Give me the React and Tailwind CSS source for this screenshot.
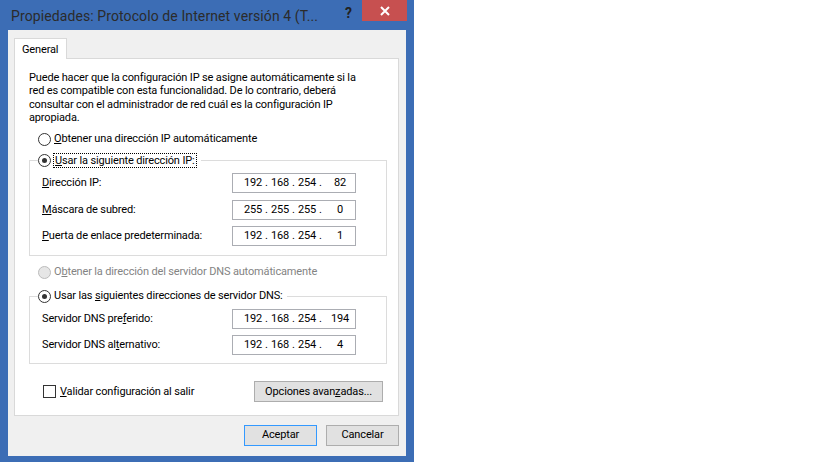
import React from 'react'

function Radio({ checked, disabled }) {
  return (
    <span
      className={
        'w-[13px] h-[13px] rounded-full border flex items-center justify-center shrink-0 ' +
        (disabled ? 'border-[#bcbcbc] bg-[#e6e6e6]' : 'border-[#333333] bg-white')
      }
    >
      {checked && <span className="w-[5px] h-[5px] rounded-full bg-[#333333]" />}
    </span>
  )
}

function IpField({ parts }) {
  return (
    <div className="w-[124px] h-[20px] border border-[#abadb3] bg-white flex items-center pl-[9px]">
      <span className="w-[22px] text-center">{parts[0]}</span>
      <span className="w-[5px] text-center">.</span>
      <span className="w-[22px] text-center">{parts[1]}</span>
      <span className="w-[5px] text-center">.</span>
      <span className="w-[22px] text-center">{parts[2]}</span>
      <span className="w-[5px] text-center">.</span>
      <span className="w-[22px] ml-[6px] text-center">{parts[3]}</span>
    </div>
  )
}

function Row({ label, parts }) {
  return (
    <div className="flex items-center justify-between h-[20px]">
      <span className="whitespace-nowrap">{label}</span>
      <IpField parts={parts} />
    </div>
  )
}

function Btn({ children, primary, className = '' }) {
  return (
    <button
      className={
        'h-[21px] bg-[#e1e1e1] border flex items-center justify-center ' +
        (primary ? 'border-[#3399ff] ' : 'border-[#adadad] ') +
        className
      }
    >
      {children}
    </button>
  )
}

export default function App() {
  return (
    <div className="w-[819px] h-[462px] bg-white flex font-['Roboto',sans-serif] text-[11px] tracking-[-0.15px] text-black">
      <div className="w-[414px] h-full bg-[#3c6db5] flex flex-col">
        {/* title bar */}
        <div className="h-[30px] flex items-start">
          <div className="flex-1 pl-[11px] pt-[6px] text-[14px] tracking-[0.1px] text-[#2b2b2b] whitespace-nowrap">
            Propiedades: Protocolo de Internet versión 4 (T...
          </div>
          <div className="w-[17px] pt-[3px] text-[14px] font-bold text-[#222]">?</div>
          <div className="w-[45px] h-[21px] bg-[#c75050] flex items-center justify-center mr-[7px]">
            <svg width="10" height="10" viewBox="0 0 10 10">
              <path d="M1 1 L9 9 M9 1 L1 9" stroke="white" strokeWidth="2" />
            </svg>
          </div>
        </div>

        {/* client */}
        <div className="mx-[8px] mb-[6px] flex-1 bg-[#f0f0f0] pt-[8px] pl-[6px] pr-[7px] flex flex-col">
          <div className="flex">
            <div className="h-[21px] w-[53px] -mb-px relative z-10 bg-white border border-b-0 border-[#d9d9d9] pl-[7px] pt-[3px]">
              General
            </div>
          </div>
          <div className="h-[358px] bg-white border border-[#d9d9d9] pl-[14px]">
            <p className="mt-[12px] leading-[13.33px] whitespace-nowrap">
              Puede hacer que la configuración IP se asigne automáticamente si la
              <br />
              red es compatible con esta funcionalidad. De lo contrario, deberá
              <br />
              consultar con el administrador de red cuál es la configuración IP
              <br />
              apropiada.
            </p>

            <div className="mt-[7px] h-[16px] flex items-center pl-[9px] gap-[3px]">
              <Radio />
              <span>
                <u>O</u>btener una dirección IP automáticamente
              </span>
            </div>

            <fieldset className="mt-[5px] w-[358px] border border-[#dcdcdc]">
              <legend className="ml-[8px] pr-[4px] h-[16px] flex items-center gap-[2px]">
                <Radio checked />
                <span className="border border-dotted border-black leading-[13px] px-px">
                  <u>U</u>sar la siguiente dirección IP:
                </span>
              </legend>
              <div className="pl-[12px] pr-[30px] pt-[5px] pb-[9px] flex flex-col gap-[6.5px]">
                <Row label={<><u>D</u>irección IP:</>} parts={['192', '168', '254', '82']} />
                <Row label={<><u>M</u>áscara de subred:</>} parts={['255', '255', '255', '0']} />
                <Row label={<><u>P</u>uerta de enlace predeterminada:</>} parts={['192', '168', '254', '1']} />
              </div>
            </fieldset>

            <div className="mt-[8px] h-[16px] flex items-center pl-[9px] gap-[3px] text-[#838383]">
              <Radio disabled />
              <span>
                O<u>b</u>tener la dirección del servidor DNS automáticamente
              </span>
            </div>

            <fieldset className="mt-[8px] w-[358px] border border-[#dcdcdc]">
              <legend className="ml-[8px] pr-[4px] h-[16px] flex items-center gap-[3px]">
                <Radio checked />
                <span>
                  Usar las <u>s</u>iguientes direcciones de servidor DNS:
                </span>
              </legend>
              <div className="pl-[12px] pr-[30px] pt-[5px] pb-[8px] flex flex-col gap-[6px]">
                <Row label={<>Servidor DNS pre<u>f</u>erido:</>} parts={['192', '168', '254', '194']} />
                <Row label={<>Servidor DNS al<u>t</u>ernativo:</>} parts={['192', '168', '254', '4']} />
              </div>
            </fieldset>

            <div className="mt-[17px] w-[358px] h-[21px] flex items-center">
              <span className="ml-[14px] w-[13px] h-[13px] border border-[#333333] bg-white" />
              <span className="ml-[4px]">
                <u>V</u>alidar configuración al salir
              </span>
              <Btn className="ml-auto mr-[4px] w-[129px]">
                Opciones avan<u>z</u>adas...
              </Btn>
            </div>
          </div>

          <div className="mt-[9px] flex justify-end gap-[9px]">
            <Btn primary className="w-[73px]">Aceptar</Btn>
            <Btn className="w-[73px]">Cancelar</Btn>
          </div>
        </div>
      </div>
    </div>
  )
}
